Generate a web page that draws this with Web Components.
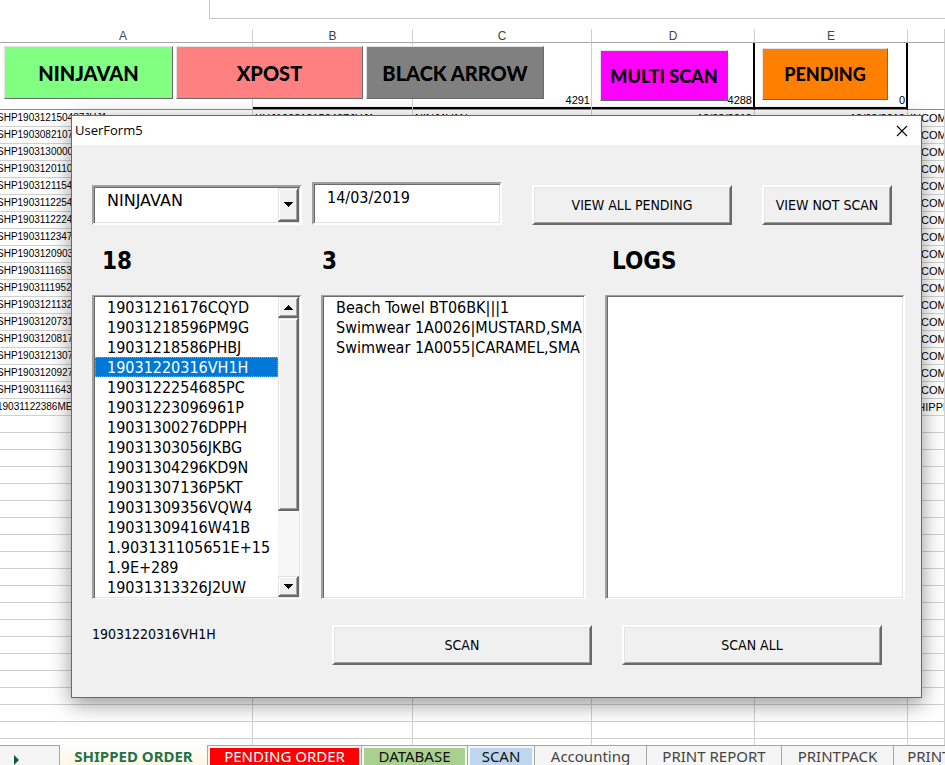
<!DOCTYPE html>
<html lang="en">
<head>
<meta charset="utf-8">
<title>Shipped orders</title>
<style>
  html, body { height: 100%; margin: 0; }
  body { background: #fff; color: #000; overflow: hidden; font-family: "Liberation Sans", sans-serif; }
</style>
</head>
<body>
<order-workbook></order-workbook>

<script>
const define = (name, html, setup) => {
  const template = document.createElement('template');
  template.innerHTML = html;
  customElements.define(name, class extends HTMLElement {
    constructor() {
      super();
      this.attachShadow({ mode: 'open' }).append(template.content.cloneNode(true));
    }
    connectedCallback() {
      if (setup && !this.ready) { this.ready = true; setup(this, this.shadowRoot); }
    }
  });
};

/* Coloured button that floats over the cells */
define('sheet-button', `
  <style>
    :host { display: block; }
    button { display: block; width: 100%; height: 100%; padding: 0; box-sizing: border-box;
      background: var(--fill); color: #000; border: 1px solid; border-color: #e3e3e3 #696969 #696969 #e3e3e3;
      font: 900 var(--size, 20px)/24px Lato, sans-serif; white-space: nowrap; }
  </style>
  <button type="button"><slot></slot></button>`);

/* Raised grey form button */
define('form-button', `
  <style>
    :host { display: block; height: 40px; }
    button { display: block; width: 100%; height: 100%; padding: 0; box-sizing: border-box;
      background: #f0f0f0; color: #000; border: 2px solid; border-color: #fff #696969 #696969 #fff;
      box-shadow: inset 1px 1px #e3e3e3, inset -1px -1px #a0a0a0;
      font: 14px/18px "DejaVu Sans Condensed", "DejaVu Sans", sans-serif; white-space: nowrap; }
  </style>
  <button type="button"><slot></slot></button>`);

/* Small raised square with an arrow */
define('arrow-cap', `
  <style>
    :host { display: flex; align-items: center; justify-content: center; box-sizing: border-box; width: 21px; height: 21px;
      background: #f0f0f0; border: 1px solid; border-color: #e3e3e3 #696969 #696969 #e3e3e3;
      border-right-width: 2px; border-bottom-width: 2px;
      box-shadow: inset 1px 1px #fff, inset -1px -1px #a0a0a0; }
    :host([up]) svg { transform: scaleY(-1); }
    svg { display: block; }
  </style>
  <svg width="10" height="5" viewBox="0 0 10 5" shape-rendering="crispEdges"><path d="M0 0H10L5 5Z"/></svg>`);

define('scroll-bar', `
  <style>
    :host { display: flex; flex-direction: column; width: 21px;
      background: repeating-conic-gradient(#fff 0 25%, #f0f0f0 0 50%) 0 0 / 2px 2px; }
    .thumb { flex: 0 0 64.3%; box-sizing: border-box; background: #f0f0f0; border: 1px solid;
      border-color: #e3e3e3 #696969 #696969 #e3e3e3; border-right-width: 2px; border-bottom-width: 2px;
      box-shadow: inset 1px 1px #fff, inset -1px -1px #a0a0a0; }
    .rest { flex: 1; }
  </style>
  <arrow-cap up></arrow-cap><div class="thumb"></div><div class="rest"></div><arrow-cap></arrow-cap>`);

define('combo-box', `
  <style>
    :host { display: block; height: 40px; }
    .frame { display: flex; height: 100%; box-sizing: border-box; padding: 1px; background: #fff;
      border: 2px solid; border-color: #a0a0a0 #fff #fff #a0a0a0;
      box-shadow: inset 1px 1px #696969, inset -1px -1px #e3e3e3; }
    select { flex: 1; min-width: 0; appearance: none; border: 0; border-radius: 0; background: none; color: #000;
      padding: 0 12px 8px; margin: 0; font: 16px/20px "DejaVu Sans", sans-serif; outline: 0; }
    arrow-cap { height: auto; pointer-events: none; }
  </style>
  <div class="frame">
    <select aria-label="Courier"><option>NINJAVAN</option><option>XPOST</option><option>BLACK ARROW</option></select>
    <arrow-cap></arrow-cap>
  </div>`);

define('date-box', `
  <style>
    :host { display: block; height: 43px; }
    input { display: block; width: 100%; height: 100%; box-sizing: border-box; padding: 1px 13px 13px; background: #fff; color: #000;
      border: 2px solid; border-color: #a0a0a0 #fff #fff #a0a0a0; border-radius: 0; outline: 0;
      box-shadow: inset 1px 1px #696969, inset -1px -1px #e3e3e3;
      font: 16px/20px "DejaVu Sans Condensed", "DejaVu Sans", sans-serif; }
  </style>
  <input type="text" value="14/03/2019" aria-label="Date">`);

define('list-box', `
  <style>
    :host { display: flex; box-sizing: border-box; min-width: 0; padding: 1px; background: #fff;
      border: solid; border-width: 1px 2px; border-color: #a0a0a0 #fff #fff #a0a0a0;
      box-shadow: inset 1px 1px #696969, inset -1px -1px #e3e3e3; }
    ul { flex: 1; min-width: 0; min-height: 300px; margin: 0; padding: 0; list-style: none; overflow: hidden;
      font: 16px/19px "DejaVu Sans Condensed", "DejaVu Sans", sans-serif; }
    li { padding: 1px 0 0 12px; white-space: nowrap; }
    li[aria-selected=true] { background: #0078d7; color: #fff; outline: 1px dotted #ff8728; outline-offset: -1px; }
  </style>
  <ul role="listbox"></ul>`, (host, root) => {
    const list = root.querySelector('ul');
    list.setAttribute('aria-label', host.getAttribute('label'));
    (host.getAttribute('items') || '').split(';').filter(Boolean).forEach(text => {
      const li = document.createElement('li');
      li.setAttribute('role', 'option');
      li.setAttribute('aria-selected', String(text === host.getAttribute('selected')));
      li.textContent = text;
      list.append(li);
    });
    if (host.hasAttribute('scrollable')) root.append(document.createElement('scroll-bar'));
  });

define('user-form', `
  <style>
    :host { display: block; box-sizing: border-box; background: #f0f0f0; border: 1px solid #696969;
      box-shadow: 0 6px 20px rgba(0,0,0,.42);
      font-family: "DejaVu Sans Condensed", "DejaVu Sans", sans-serif; }
    header { display: flex; align-items: center; justify-content: space-between; height: 29px; padding: 0 12px 0 3px;
      background: #fff; font: 13px/18px "Open Sans", sans-serif; }
    header button { width: 14px; height: 14px; padding: 1px; border: 0; background: none; }
    header svg { display: block; }
    h1 { margin: 0; padding-bottom: 2px; font: inherit; }
    .inputs { display: flex; align-items: flex-end; gap: 30px; padding: 37px 29px 0 20px; }
    .pair { flex: 400 1 10px; display: flex; align-items: flex-end; gap: 10px; }
    combo-box { flex: 210 1 0; } date-box { flex: 190 1 0; }
    .all { flex: 200 1 0; } .not { flex: 130 1 0; }
    .heads { display: grid; grid-template-columns: 220fr 290fr 293fr; align-items: center; height: 68px; padding: 2px 16px 0 30px; }
    h2 { margin: 0; font-size: 24px; line-height: 30px; font-weight: bold; }
    .lists { display: grid; grid-template-columns: 210fr 265fr 300fr; column-gap: 19px; padding: 0 16px 0 20px; }
    .actions { display: grid; grid-template-columns: 210fr 260fr 260fr; column-gap: 30px; padding: 26px 39px 32px 20px; }
    output { font-size: 14px; line-height: 18px; }
  </style>
  <header><h1>UserForm5</h1>
    <button type="button" aria-label="Close"><svg width="12" height="12" viewBox="0 0 12 12" stroke="#000" stroke-width="1.1"><path d="M1 1L11 11M11 1L1 11"/></svg></button>
  </header>
  <div class="inputs">
    <div class="pair"><combo-box></combo-box><date-box></date-box></div>
    <form-button class="all">VIEW ALL PENDING</form-button>
    <form-button class="not">VIEW NOT SCAN</form-button>
  </div>
  <div class="heads"><h2>18</h2><h2>3</h2><h2>LOGS</h2></div>
  <div class="lists">
    <list-box label="Orders" scrollable selected="19031220316VH1H"
      items="19031216176CQYD;19031218596PM9G;19031218586PHBJ;19031220316VH1H;1903122254685PC;19031223096961P;19031300276DPPH;19031303056JKBG;19031304296KD9N;19031307136P5KT;19031309356VQW4;19031309416W41B;1.903131105651E+15;1.9E+289;19031313326J2UW"></list-box>
    <list-box label="Items" items="Beach Towel BT06BK|||1;Swimwear 1A0026|MUSTARD,SMA;Swimwear 1A0055|CARAMEL,SMA"></list-box>
    <list-box label="Logs"></list-box>
  </div>
  <div class="actions">
    <output>19031220316VH1H</output>
    <form-button>SCAN</form-button>
    <form-button>SCAN ALL</form-button>
  </div>`);

define('sheet-grid', `
  <style>
    :host { display: block; position: relative; overflow: hidden; }
    table { width: 100%; table-layout: fixed; border-collapse: separate; border-spacing: 0; font-size: 11px; line-height: 16px; }
    th { height: 12px; padding: 1px 0 0; line-height: 12px; font-size: 12px; font-weight: normal; color: #444;
      border-right: 1px solid #d0d0d0; border-bottom: 1px solid #a6a6a6; }
    th:first-child { padding-right: 6px; }
    td { height: 16px; padding: 0 2px; white-space: nowrap; overflow: hidden;
      border-right: 1px solid #d0d0d0; border-bottom: 1px solid #d0d0d0; }
    td:first-child { padding: 0; text-indent: -3px; font-size: 10px; }
    td:nth-child(4), td:nth-child(5) { text-align: right; }
    .top td { height: 65px; box-sizing: content-box; vertical-align: bottom; text-align: right; border-bottom-color: #8c8c8c; padding: 0 1px 1px; }
    .top td:nth-child(n+2):nth-child(-n+5) { box-shadow: inset 0 -2px #000; }
    .top td:nth-child(4), .top td:nth-child(5) { border-right: 2px solid #000; }
    .floating { position: absolute; top: 17px; left: 4px; display: flex; align-items: flex-start; }
    .n { width: 169px; height: 53px; margin-right: 3px; --fill: #80ff80; }
    .x { width: 187px; height: 53px; margin-right: 3px; --fill: #ff8080; }
    .b { width: 178px; height: 53px; margin-right: 56px; --fill: #808080; }
    .m { width: 128px; height: 51px; margin: 4px 34px 0 0; --fill: #f0f; --size: 18px; }
    .p { width: 126px; height: 52px; margin-top: 2px; --fill: #ff8000; --size: 18px; }
  </style>
  <table>
    <colgroup><col style="width:253px"><col style="width:160px"><col style="width:179px"><col style="width:163px"><col style="width:153px"><col></colgroup>
    <thead><tr><th>A</th><th>B</th><th>C</th><th>D</th><th>E</th><th></th></tr></thead>
    <tbody><tr class="top"><td></td><td></td><td>4291</td><td>4288</td><td>0</td><td></td></tr></tbody>
  </table>
  <div class="floating">
    <sheet-button class="n">NINJAVAN</sheet-button>
    <sheet-button class="x">XPOST</sheet-button>
    <sheet-button class="b">BLACK ARROW</sheet-button>
    <sheet-button class="m">MULTI SCAN</sheet-button>
    <sheet-button class="p">PENDING</sheet-button>
  </div>`, (host, root) => {
    const orders = ['SHP190312150437JHJ1', 'SHP1903082107', 'SHP1903130000', 'SHP1903120110', 'SHP1903121154', 'SHP1903112254',
      'SHP1903112224', 'SHP1903112347', 'SHP1903120903', 'SHP1903111653', 'SHP1903111952', 'SHP1903121132', 'SHP1903120731',
      'SHP1903120817', 'SHP1903121307', 'SHP1903120927', 'SHP1903111643', '19031122386ME'];
    const body = root.querySelector('tbody');
    for (let i = 0; i < 38; i++) {
      const cells = [orders[i] || '', '', '', '', '', i < 17 ? 'INCOMPLETE' : i === 17 ? 'SHIPPED' : ''];
      if (i === 0) cells.splice(1, 4, 'KHJ190312150437JHJ1', 'NINJAVAN', '13/03/2019', '13/03/2019');
      const row = body.insertRow();
      cells.forEach(text => { row.insertCell().textContent = text; });
    }
  });

define('sheet-tabs', `
  <style>
    :host { display: flex; height: 20px; overflow: hidden; background: #f5f5f5; font: 15px/16px "Noto Sans", sans-serif; }
    .scroll { flex: 0 0 60px; box-sizing: border-box; border: solid #a6a6a6; border-width: 1px 1px 0 0; padding: 8px 0 0 14px; background: #f5f5f5; margin: 0; }
    .scroll svg { display: block; }
    nav { flex: 1; min-width: 0; display: flex; overflow: hidden; }
    a { flex: 0 0 auto; box-sizing: border-box; display: block; padding: 2px 2px 0; border-top: 1px solid #a6a6a6; border-right: 1px solid #a6a6a6;
      color: #444; text-decoration: none; text-align: center; white-space: nowrap; }
    span { display: block; padding-bottom: 2px; background: var(--tint, transparent); }
    a.on { border-top: 0; padding-top: 3px; color: #217346; font-weight: bold; background: linear-gradient(#fff, #fff6e4); }
  </style>
  <button class="scroll" type="button" aria-label="Next sheets"><svg width="6" height="10" viewBox="0 0 6 10"><path d="M0 0L5 5L0 10Z" fill="#0e5c2f"/></svg></button>
  <nav>
    <a href="#shipped" class="on" style="width:148px"><span>SHIPPED ORDER</span></a>
    <a href="#pending" style="width:154px;--tint:#f00;color:#fff"><span>PENDING ORDER</span></a>
    <a href="#database" style="width:106px;--tint:#a9d08e;color:#111"><span>DATABASE</span></a>
    <a href="#scan" style="width:67px;--tint:#bdd7ee;color:#111"><span>SCAN</span></a>
    <a href="#accounting" style="width:112px"><span>Accounting</span></a>
    <a href="#report" style="width:135px"><span>PRINT REPORT</span></a>
    <a href="#pack" style="width:112px"><span>PRINTPACK</span></a>
    <a href="#print" style="width:104px"><span>PRINT LIST</span></a>
  </nav>`);

define('order-workbook', `
  <style>
    :host { display: flex; flex-direction: column; height: 100vh; position: relative; overflow: hidden; }
    .formula { height: 18px; flex: none; margin-left: 209px; border: solid #c6c6c6; border-width: 0 0 1px 1px; }
    sheet-grid { flex: 1; min-height: 0; margin-top: 10px; }
    sheet-tabs { flex: none; }
    user-form { position: absolute; top: 115px; left: 71px; right: 23px; }
  </style>
  <div class="formula"></div>
  <sheet-grid></sheet-grid>
  <sheet-tabs></sheet-tabs>
  <user-form></user-form>`);
</script>
</body>
</html>
